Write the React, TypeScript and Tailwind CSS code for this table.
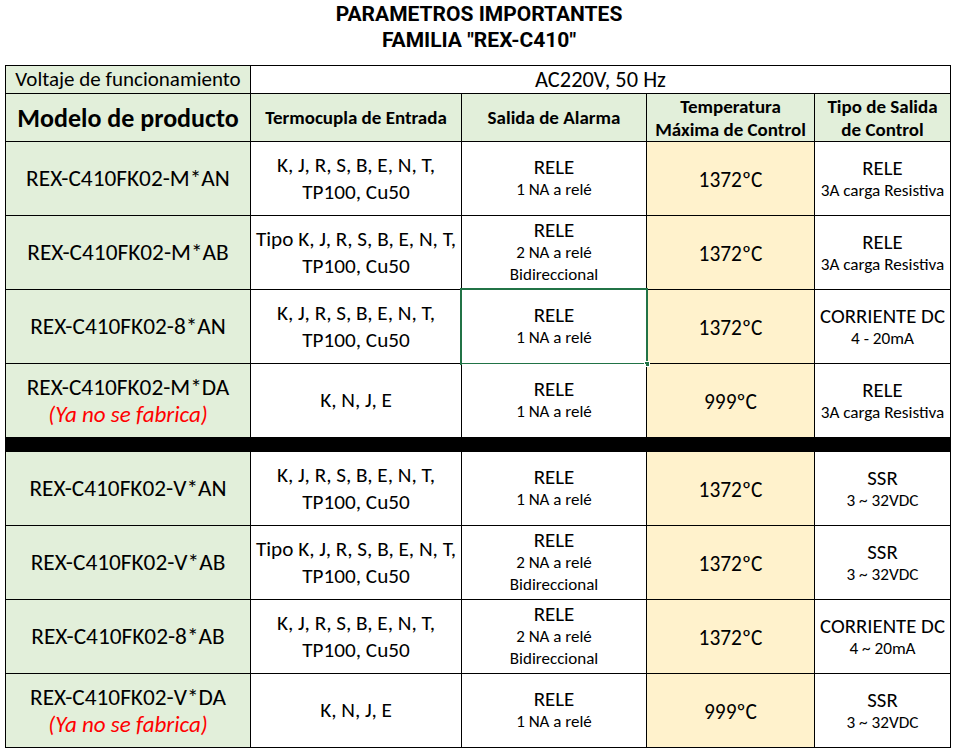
import React from "react";

type Row = {
  model: string;
  discontinued?: boolean;
  input: string[];
  alarm: string[];
  temp: string;
  out: string;
  outSub: string;
  selected?: boolean;
};

const top: Row[] = [
  { model: "REX-C410FK02-M*AN", input: ["K, J, R, S, B, E, N, T,", "TP100, Cu50"], alarm: ["1 NA a relé"], temp: "1372ºC", out: "RELE", outSub: "3A carga Resistiva" },
  { model: "REX-C410FK02-M*AB", input: ["Tipo K, J, R, S, B, E, N, T,", "TP100, Cu50"], alarm: ["2 NA a relé", "Bidireccional"], temp: "1372ºC", out: "RELE", outSub: "3A carga Resistiva" },
  { model: "REX-C410FK02-8*AN", input: ["K, J, R, S, B, E, N, T,", "TP100, Cu50"], alarm: ["1 NA a relé"], temp: "1372ºC", out: "CORRIENTE DC", outSub: "4 - 20mA", selected: true },
  { model: "REX-C410FK02-M*DA", discontinued: true, input: ["K, N, J, E"], alarm: ["1 NA a relé"], temp: "999ºC", out: "RELE", outSub: "3A carga Resistiva" },
];

const bottom: Row[] = [
  { model: "REX-C410FK02-V*AN", input: ["K, J, R, S, B, E, N, T,", "TP100, Cu50"], alarm: ["1 NA a relé"], temp: "1372ºC", out: "SSR", outSub: "3 ~ 32VDC" },
  { model: "REX-C410FK02-V*AB", input: ["Tipo K, J, R, S, B, E, N, T,", "TP100, Cu50"], alarm: ["2 NA a relé", "Bidireccional"], temp: "1372ºC", out: "SSR", outSub: "3 ~ 32VDC" },
  { model: "REX-C410FK02-8*AB", input: ["K, J, R, S, B, E, N, T,", "TP100, Cu50"], alarm: ["2 NA a relé", "Bidireccional"], temp: "1372ºC", out: "CORRIENTE DC", outSub: "4 ~ 20mA" },
  { model: "REX-C410FK02-V*DA", discontinued: true, input: ["K, N, J, E"], alarm: ["1 NA a relé"], temp: "999ºC", out: "SSR", outSub: "3 ~ 32VDC" },
];

function DataRow({ r }: { r: Row }) {
  return (
    <>
      <div className="bg-[#e2efda] h-[73px] flex flex-col items-center justify-center whitespace-nowrap">
        <div className="text-[23.3px] leading-[27px]">{r.model}</div>
        {r.discontinued && (
          <div className="text-[23px] leading-[27px] italic text-[#ff0000]">(Ya no se fabrica)</div>
        )}
      </div>
      <div className="bg-white flex flex-col items-center justify-center text-[21.2px] leading-[27px] whitespace-nowrap">
        {r.input.map((t) => (
          <div key={t}>{t}</div>
        ))}
      </div>
      <div className="bg-white relative flex flex-col items-center justify-center whitespace-nowrap">
        <div className="text-[21px] leading-[23px]">RELE</div>
        {r.alarm.map((t) => (
          <div key={t} className="text-[17px] leading-[22px]">{t}</div>
        ))}
        {r.selected && (
          <>
            <div className="absolute -left-[2px] -top-[2px] -right-[2px] -bottom-[2px] border-2 border-[#217346]" />
            <div className="absolute -right-[4px] -bottom-[4px] w-[6px] h-[6px] bg-[#217346] border border-white" />
          </>
        )}
      </div>
      <div className="bg-[#fff2cc] flex items-center justify-center pt-[4px] text-[21.4px] leading-[27px]">{r.temp}</div>
      <div className="bg-white flex flex-col items-center justify-center whitespace-nowrap">
        <div className="text-[20.8px] leading-[24px]">{r.out}</div>
        <div className="text-[17.2px] leading-[22px]">{r.outSub}</div>
      </div>
    </>
  );
}

export default function App() {
  return (
    <div className="w-[958px] h-[752px] bg-white text-black overflow-hidden" style={{ fontFamily: "Carlito, Calibri, Lato, 'Liberation Sans', sans-serif" }}>
      <div className="h-[65px] flex flex-col items-center pt-[1px] font-bold text-[21px] leading-[26px]" style={{ fontFamily: "Roboto, 'DejaVu Sans', sans-serif" }}>
        <div>PARAMETROS IMPORTANTES</div>
        <div>FAMILIA "REX-C410"</div>
      </div>
      <div className="ml-[5px] w-[946px] bg-black p-px grid grid-cols-[244px_210px_184px_167px_135px] gap-px">
        <div className="bg-[#e2efda] h-[27px] flex items-center justify-center text-[21px] leading-[27px] whitespace-nowrap">Voltaje de funcionamiento</div>
        <div className="col-span-4 bg-white h-[27px] flex items-center justify-center text-[22.4px] leading-[27px]">AC220V, 50 Hz</div>

        <div className="bg-[#e2efda] h-[47px] flex items-center justify-center font-bold text-[26px] leading-[30px] whitespace-nowrap">Modelo de producto</div>
        <div className="bg-[#e2efda] flex items-center justify-center font-bold text-[19px] leading-[23px] whitespace-nowrap">Termocupla de Entrada</div>
        <div className="bg-[#e2efda] flex items-center justify-center font-bold text-[19px] leading-[23px] whitespace-nowrap">Salida de Alarma</div>
        <div className="bg-[#e2efda] flex flex-col items-center justify-center font-bold text-[19px] leading-[23px] whitespace-nowrap">
          <div>Temperatura</div>
          <div>Máxima de Control</div>
        </div>
        <div className="bg-[#e2efda] flex flex-col items-center justify-center font-bold text-[19px] leading-[23px] whitespace-nowrap">
          <div>Tipo de Salida</div>
          <div>de Control</div>
        </div>

        {top.map((r) => (
          <DataRow key={r.model} r={r} />
        ))}
        <div className="col-span-5 h-[13px] bg-black" />
        {bottom.map((r) => (
          <DataRow key={r.model} r={r} />
        ))}
      </div>
    </div>
  );
}
